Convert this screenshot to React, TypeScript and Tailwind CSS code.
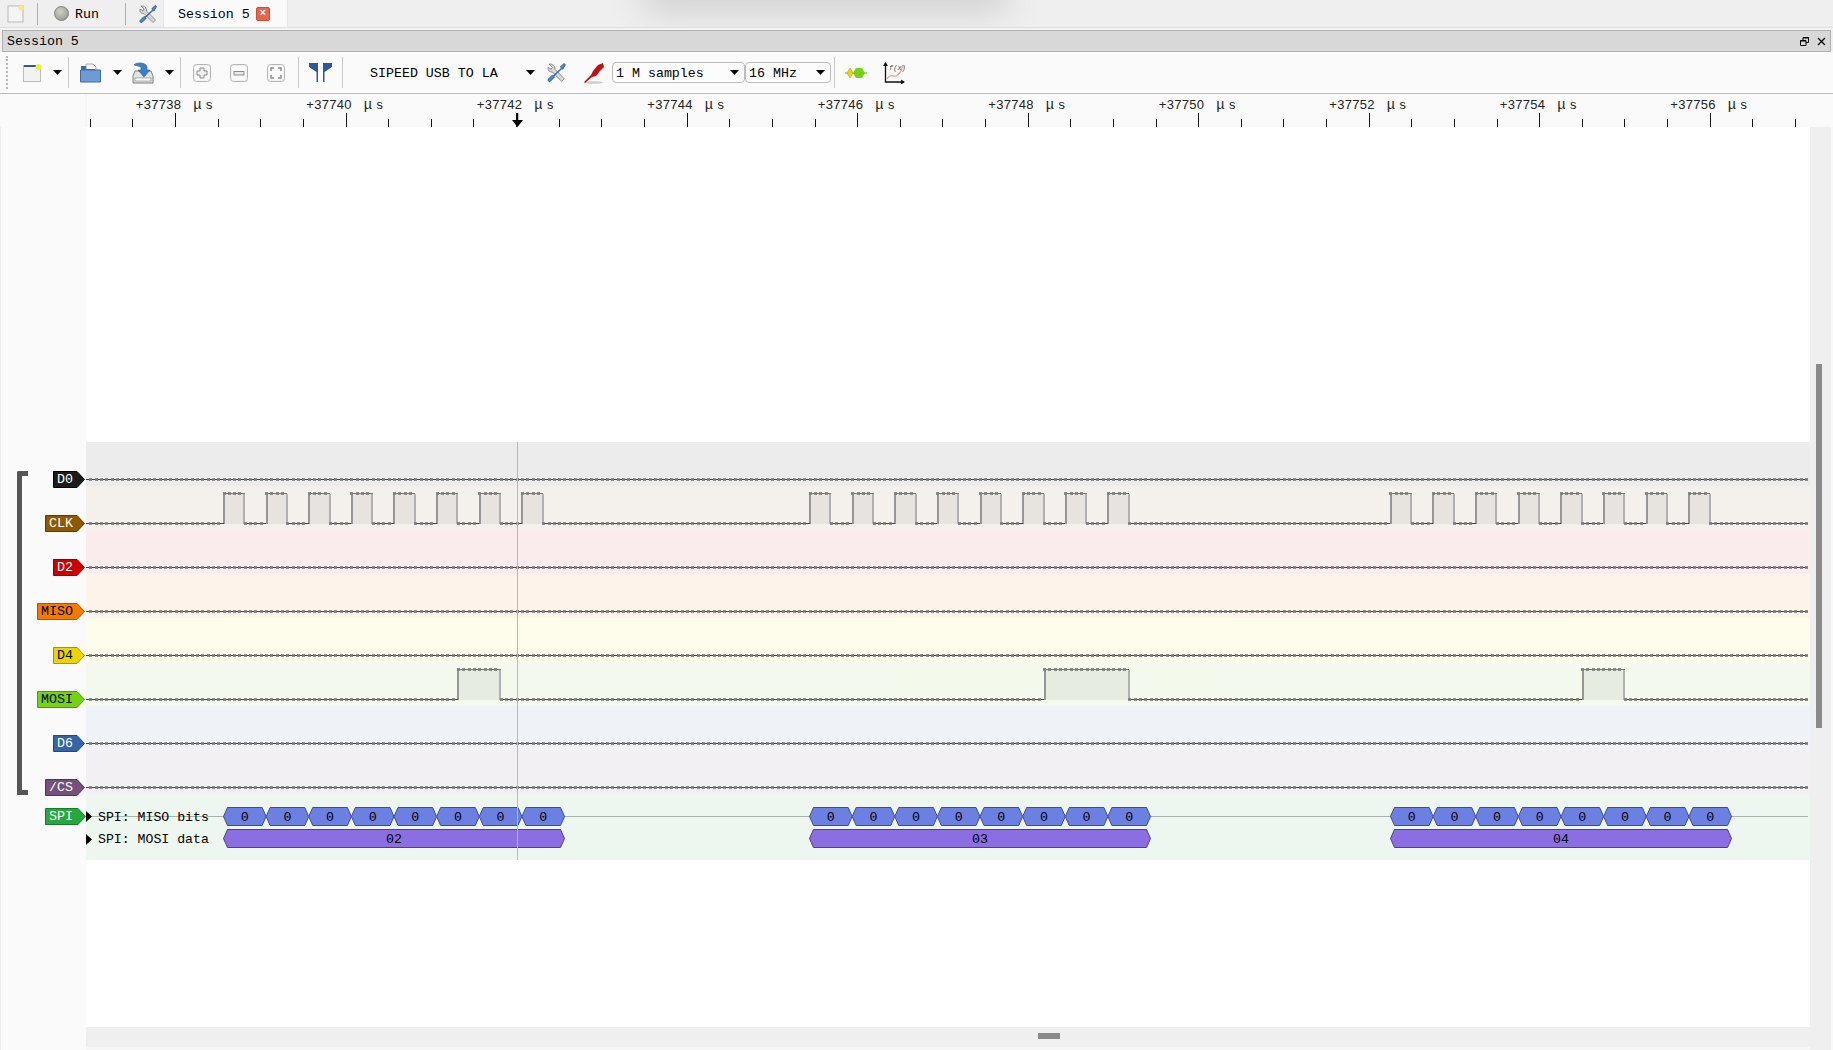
import React from 'react'

const SAMPLE = 5.328
const sx = (i: number) => 137.5 + i * SAMPLE
const clk = (start: number) => Array.from({ length: 8 }, (_, k): [number, number] => [start + k * 8, start + k * 8 + 4])

const rows = [
  { name: 'D0', w: 32, fill: '#1a1c1c', line: '#000000', text: 'text-white', band: 'bg-[#ececec]', highs: [] as [number, number][] },
  { name: 'CLK', w: 40, fill: '#8f5902', line: '#5f3b00', text: 'text-white', band: 'bg-[#f4f1ec]', highs: [...clk(0), ...clk(110), ...clk(219)] },
  { name: 'D2', w: 32, fill: '#cc0000', line: '#8f0000', text: 'text-white', band: 'bg-[#faecec]', highs: [] },
  { name: 'MISO', w: 48, fill: '#f57900', line: '#ad5500', text: 'text-black', band: 'bg-[#fef3eb]', highs: [] },
  { name: 'D4', w: 32, fill: '#edd400', line: '#a69500', text: 'text-black', band: 'bg-[#fefdeb]', highs: [] },
  { name: 'MOSI', w: 48, fill: '#73d216', line: '#4e9a06', text: 'text-black', band: 'bg-[#f3f9ec]', highs: [[44, 52], [154, 170], [255, 263]] as [number, number][] },
  { name: 'D6', w: 32, fill: '#3465a4', line: '#204a87', text: 'text-white', band: 'bg-[#eff3f8]', highs: [] },
  { name: '/CS', w: 40, fill: '#75507b', line: '#4f3553', text: 'text-white', band: 'bg-[#f2f0f3]', highs: [] },
]

function Caret({ className = '' }: { className?: string }) {
  return (
    <svg width="9" height="5" viewBox="0 0 9 5" className={className}>
      <path d="M0 0h9L4.5 5z" fill="#000" />
    </svg>
  )
}

function Sep({ className = '' }: { className?: string }) {
  return <div className={`w-px h-[31px] bg-[#c8c8c8] ${className}`} />
}

function ToolsIcon({ size = 20 }: { size?: number }) {
  return (
    <svg width={size} height={size} viewBox="0 0 20 20">
      <path d="M3 2l3 3-1 2-3-2c-.5 3 1.500 5 4 4.500l9 9 2.500-2.500-9-9C9 4 6.500 1.500 3 2z" fill="#d8d8d8" stroke="#7a7a7a" strokeWidth=".8" />
      <path d="M18.500 2.500l-1.500-1-3 3 .5 1.500L7 13l-1-.5-4 4c-.5 1 .5 2.500 2 2l4-4-.5-1L15 6.500l1 .5z" fill="#4d86c4" stroke="#2a5a94" strokeWidth=".8" />
    </svg>
  )
}

function SquareBtn({ children }: { children: React.ReactNode }) {
  return (
    <svg width="18" height="18" viewBox="0 0 18 18">
      <rect x=".5" y=".5" width="17" height="17" rx="3" fill="#f2f2f2" stroke="#b4b4b4" />
      <rect x="2" y="2" width="14" height="14" rx="2" fill="#fafafa" />
      {children}
    </svg>
  )
}

function Track({ highs }: { highs: [number, number][] }) {
  const isHigh = (i: number) => highs.some(([a, b]) => i >= a && i < b)
  const low = 37.5
  const high = 7.5
  let dots = ''
  for (let i = -25; i <= 297; i++) {
    const x = Math.round(sx(i)) - 1
    const y = (isHigh(i) ? high : low) - 1.5
    dots += `M${x} ${y}h3v3h-3z`
  }
  let lowPath = `M0 ${low}`
  highs.forEach(([a, b]) => {
    lowPath += `H${sx(a)}M${sx(b)} ${low}`
  })
  lowPath += `H1722`
  return (
    <svg width="1725" height="44" className="block" shapeRendering="crispEdges">
      {highs.map(([a, b]) => (
        <g key={a}>
          <rect x={sx(a)} y={high} width={sx(b) - sx(a)} height={low - high} fill="#000" fillOpacity=".05" />
          <path d={`M${sx(a)} ${high}H${sx(b)}`} stroke="#10b810" strokeWidth="1" />
          <path d={`M${sx(a) + .5} ${high}V${low}`} stroke="#969696" strokeWidth="2" />
          <path d={`M${sx(b) - .5} ${high}V${low}`} stroke="#b0b0b0" strokeWidth="2" />
        </g>
      ))}
      <path d={lowPath} stroke="#b80f0f" strokeWidth="1" fill="none" />
      <path d={dots} fill="#808080" fillOpacity=".9" />
    </svg>
  )
}

function Hex({ x, w, y, h, fill, stroke, label }: { x: number; w: number; y: number; h: number; fill: string; stroke: string; label: string }) {
  const c = 4
  const points = `${x},${y + h / 2} ${x + c},${y} ${x + w - c},${y} ${x + w},${y + h / 2} ${x + w - c},${y + h} ${x + c},${y + h}`
  return (
    <g>
      <polygon points={points} fill={fill} stroke={stroke} strokeWidth="1" />
      <text x={x + w / 2} y={y + h / 2 + 4} textAnchor="middle" fontSize="13.300" fill="#000">{label}</text>
    </g>
  )
}

function SpiTrack() {
  const groups = [{ x: 137.5, v: '02' }, { x: 723.5, v: '03' }, { x: 1304.5, v: '04' }]
  return (
    <svg width="1725" height="66" className="block">
      <path d="M0 22.500H1722" stroke="#a9b3ab" strokeWidth="1" />
      <path d="M0 17v11l6-5.500z" fill="#000" />
      <path d="M0 40v11l6-5.500z" fill="#000" />
      <text x="12" y="26.500" fontSize="13.200" fill="#000">SPI: MISO bits</text>
      <text x="12" y="49" fontSize="13.200" fill="#000">SPI: MOSI data</text>
      {groups.map(g => (
        <g key={g.v}>
          {Array.from({ length: 8 }, (_, k) => (
            <Hex key={k} x={g.x + k * 42.63} w={42.63} y={13.5} h={18} fill="#6c80e2" stroke="#3c4c98" label="0" />
          ))}
          <Hex x={g.x} w={341} y={35.5} h={18} fill="#8b6fe2" stroke="#4c3d90" label={g.v} />
        </g>
      ))}
    </svg>
  )
}

function Ruler() {
  const minors = Array.from({ length: 41 }, (_, i) => i).map(i => 89.8 + i * 42.63)
  const majors = Array.from({ length: 10 }, (_, i) => ({ x: 175.3 + i * 170.5, v: 37738 + i * 2 }))
  return (
    <svg width="1833" height="33" className="block">
      <path d="M86 0V33" stroke="#f0f0f0" />
      {minors.map((x, i) => (
        <path key={i} d={`M${Math.round(x) + .5} ${(i + 2) % 4 === 0 ? 19 : 25}V33`} stroke="#111" shapeRendering="crispEdges" />
      ))}
      {majors.map(m => (
        <g key={m.v} fill="#222">
          <text x={m.x - 39.5} y="14.500" fontSize="13" fontFamily="'Liberation Sans', sans-serif" letterSpacing=".3">+{m.v}</text>
          <text x={m.x + 18} y="14.500" fontSize="14">μ</text>
          <text x={m.x + 30} y="14.500" fontSize="13">s</text>
        </g>
      ))}
      <path d="M517.500 19V26" stroke="#000" strokeWidth="1.500" />
      <path d="M512 26h11l-5.500 7z" fill="#000" />
    </svg>
  )
}

function PortLabel({ name, w, fill, line, text }: { name: string; w: number; fill: string; line: string; text: string }) {
  return (
    <div className={`relative h-[17px] flex items-center pl-[3px] text-[13.3px] leading-none ${text}`} style={{ width: w }}>
      <svg width={w} height="17" className="absolute left-0 top-0">
        <polygon points={`.5,.5 ${w - 8},.5 ${w - .5},8.500 ${w - 8},16.500 .5,16.500`} fill={fill} stroke={line} />
      </svg>
      <span className="relative pl-[1px]">{name}</span>
    </div>
  )
}

export default function App() {
  return (
    <div className="flex flex-col w-full h-[1050px] overflow-hidden bg-[#f0f0f0] font-['Liberation_Mono',monospace] text-[13.3px] text-black">
      {/* Tab bar */}
      <div className="relative flex items-center h-[27px] overflow-hidden bg-[#efefef]">
        <div className="absolute left-[640px] -top-[22px] w-[370px] h-[34px] rounded-full bg-[#cfcfcf] blur-lg" />
        <svg width="17" height="18" viewBox="0 0 17 18" className="ml-[7px]">
          <rect x="1" y="1" width="15" height="16" fill="#f4f4f4" stroke="#b8b8b8" />
          <circle cx="14" cy="3" r="2.500" fill="#f5ee70" />
        </svg>
        <div className="w-px h-[22px] ml-[13px] bg-[#b0b0b0]" />
        <div className="w-[15px] h-[15px] ml-[16px] rounded-full border border-[#808080] bg-[radial-gradient(circle_at_40%_35%,#d0d0c8,#8e8e88)]" />
        <span className="ml-[6px] pt-[2px]">Run</span>
        <div className="w-px h-[22px] ml-[26px] bg-[#b0b0b0]" />
        <div className="ml-[12px]"><ToolsIcon size={20} /></div>
        <div className="relative flex items-center self-end h-[27px] w-[125px] ml-[5px] pl-[14px] bg-[#fafafa] border-x border-[#e6e6e6]">
          <span className="pt-[2px]">Session 5</span>
          <span className="flex items-center justify-center w-[14px] h-[14px] ml-[6px] rounded-[2px] bg-[#e8644c] border border-[#d04a30] text-white text-[11px] font-bold leading-none">×</span>
        </div>
      </div>
      <div className="h-[3px] bg-[#f4f4f4] border-t border-[#dedede]" />

      {/* Session title */}
      <div className="flex items-center justify-between h-[22px] mx-[2px] pl-[4px] pr-[4px] bg-[#d8d8d8] border border-[#b0b0b0]">
        <span className="pt-[2px]">Session 5</span>
        <div className="flex items-center gap-[8px]">
          <svg width="9" height="9" viewBox="0 0 9 9">
            <path d="M.5 3.500h5.500v5H.5zM3 3.500V.5h5.500v5H6" fill="none" stroke="#000" />
            <path d="M.5 4h5.500M3 1h5.500" stroke="#000" />
          </svg>
          <svg width="9" height="9" viewBox="0 0 9 9">
            <path d="M1 1l7 7M8 1l-7 7" stroke="#000" strokeWidth="1.300" />
          </svg>
        </div>
      </div>

      {/* Toolbar */}
      <div className="flex items-center h-[42px] bg-[#fafafa] border-b border-[#bcbcbc]">
        <div className="w-[2px] h-[33px] ml-[6px] border-l-2 border-dotted border-[#b8b8b8]" />
        <svg width="19" height="18" viewBox="0 0 19 18" className="ml-[15px]">
          <rect x=".5" y="1.500" width="17" height="16" fill="#f2f2f0" stroke="#bdbdbd" />
          <path d="M1 2h15" stroke="#2a5a9c" strokeWidth="2" />
          <circle cx="15.500" cy="3" r="3" fill="#f2ee38" />
        </svg>
        <Caret className="ml-[11px]" />
        <Sep className="ml-[6px]" />
        <svg width="21" height="20" viewBox="0 0 21 20" className="ml-[11px]">
          <path d="M6 1h7l3 3v6H6z" fill="#f4f4f4" stroke="#a8a8a8" />
          <path d="M1 3h5v3h9v2H1z" fill="#3d6ca8" />
          <path d="M.5 7h20v12H.5z" fill="#6e9bd2" stroke="#3d6ca8" />
        </svg>
        <Caret className="ml-[12px]" />
        <svg width="22" height="22" viewBox="0 0 22 22" className="ml-[10px]">
          <path d="M3 9h16l2 5v7H1v-7z" fill="#e4e4e2" stroke="#7c7c7c" />
          <rect x="3" y="16" width="16" height="3" fill="#fff" stroke="#7c7c7c" strokeWidth=".6" />
          <path d="M2 3c2-3 12-3 13 2v3h3l-6 7-6-7h3V6C9 4 5 4 2 3z" fill="#3d7fc4" stroke="#2a5a94" strokeWidth=".6" />
        </svg>
        <Caret className="ml-[11px]" />
        <Sep className="ml-[6px]" />
        <div className="ml-[12px]">
          <SquareBtn><path d="M7 4h4v3h3v4h-3v3H7v-3H4V7h3z" fill="#f0f0f0" stroke="#8c8c8c" /></SquareBtn>
        </div>
        <div className="ml-[19px]">
          <SquareBtn><rect x="4" y="7.500" width="10" height="3.500" fill="#e8e8e8" stroke="#8c8c8c" /></SquareBtn>
        </div>
        <div className="ml-[19px]">
          <SquareBtn><path d="M4 7V4h3M11 4h3v3M14 11v3h-3M7 14H4v-3" fill="none" stroke="#8c8c8c" strokeWidth="1.500" /></SquareBtn>
        </div>
        <Sep className="ml-[13px]" />
        <svg width="23" height="19" viewBox="0 0 23 19" className="ml-[10px]">
          <path d="M0 0h9v19H7.500V9L0 4z" fill="#2a5a9c" />
          <path d="M23 0h-9v19h1.500V9L23 4z" fill="#2a5a9c" />
        </svg>
        <Sep className="ml-[10px]" />
        <span className="ml-[27px] w-[156px] pt-[2px]">SIPEED USB TO LA</span>
        <Caret />
        <div className="ml-[11px]"><ToolsIcon size={21} /></div>
        <svg width="22" height="22" viewBox="0 0 22 22" className="ml-[16px]">
          <ellipse cx="11" cy="20.500" rx="9" ry="1.300" fill="#cccccc" />
          <path d="M1 20l7-7 2-4 5-6 5-2 1 4-4 4-4 5-4 1-7 6z" fill="#c40f14" />
        </svg>
        <div className="flex items-center justify-between w-[133px] h-[21px] ml-[7px] pl-[3px] pr-[5px] bg-[#fcfcfc] border border-[#bcbcbc] rounded-[4px]">
          <span className="pt-[2px]">1 M samples</span>
          <Caret />
        </div>
        <div className="flex items-center justify-between w-[86px] h-[21px] pl-[3px] pr-[5px] bg-[#fcfcfc] border border-[#bcbcbc] rounded-[4px]">
          <span className="pt-[2px]">16 MHz</span>
          <Caret />
        </div>
        <Sep className="ml-[3px]" />
        <svg width="22" height="12" viewBox="0 0 22 12" className="ml-[10px]">
          <path d="M0 6h22" stroke="#8a9a7a" />
          <path d="M2 6l3-5 3 5-3 5z" fill="#edd400" stroke="#b0a000" strokeWidth=".6" />
          <path d="M8 6l3-5h6l3 5-3 5h-6z" fill="#73d216" />
        </svg>
        <svg width="22" height="22" viewBox="0 0 22 22" className="ml-[16px]">
          <path d="M2.500 1v19H21" fill="none" stroke="#111" strokeWidth="1.300" />
          <path d="M0 4l2.500-4L5 4zM18 17.500l4 2.500-4 2.500z" fill="#111" />
          <path d="M4 17c4-6 6-2 9-3s5-3 7-11" fill="none" stroke="#ee9a9a" strokeWidth="1.200" />
          <text x="6" y="8" fontSize="7" fontStyle="italic" fill="#444">f(x)</text>
        </svg>
      </div>

      {/* Time ruler */}
      <div className="h-[33px] bg-[#fafafa]">
        <Ruler />
      </div>

      {/* Trace view */}
      <div className="flex flex-1 min-h-0">
        <div className="w-[86px] shrink-0 pt-[315px] bg-[#fafafa] border-l border-[#ececec]">
          <div className="relative">
            <div className="absolute left-[16px] top-[29px] w-[11px] h-[324px] border-y-[5px] border-l-[5px] border-[#555555] rounded-tl-[2px]" />
            {rows.map(r => (
              <div key={r.name} className="flex justify-end h-[44px] pt-[29px] pr-[1px]">
                <PortLabel name={r.name} w={r.w} fill={r.fill} line={r.line} text={r.text} />
              </div>
            ))}
            <div className="flex justify-end h-[66px] pt-[14px]">
              <PortLabel name="SPI" w={41} fill="#27a83f" line="#1a7a2c" text="text-white" />
            </div>
          </div>
        </div>

        <div className="relative flex flex-col flex-1 min-w-0">
          <div className="h-[315px] bg-white" />
          {rows.map(r => (
            <div key={r.name} className={`h-[44px] overflow-hidden ${r.band}`}>
              <Track highs={r.highs} />
            </div>
          ))}
          <div className="h-[66px] overflow-hidden bg-[#edf6ef]">
            <SpiTrack />
          </div>
          <div className="flex-1 bg-white" />
          <div className="absolute left-[431px] top-[315px] w-px h-[418px] bg-[#b8b8b8]" />
          <div className="flex justify-start h-[23px] pt-[6px] bg-[#efefef] border-b-[3px] border-[#f6f6f6]">
            <div className="w-[22px] h-[6px] ml-[952px] bg-[#8a8a8a]" />
          </div>
        </div>

        <div className="w-[23px] shrink-0 pt-[237px] pl-[6px] bg-[#efefef] border-r-2 border-[#f8f8f8]">
          <div className="w-[6px] h-[364px] bg-[#8a8a8a]" />
        </div>
      </div>
    </div>
  )
}
